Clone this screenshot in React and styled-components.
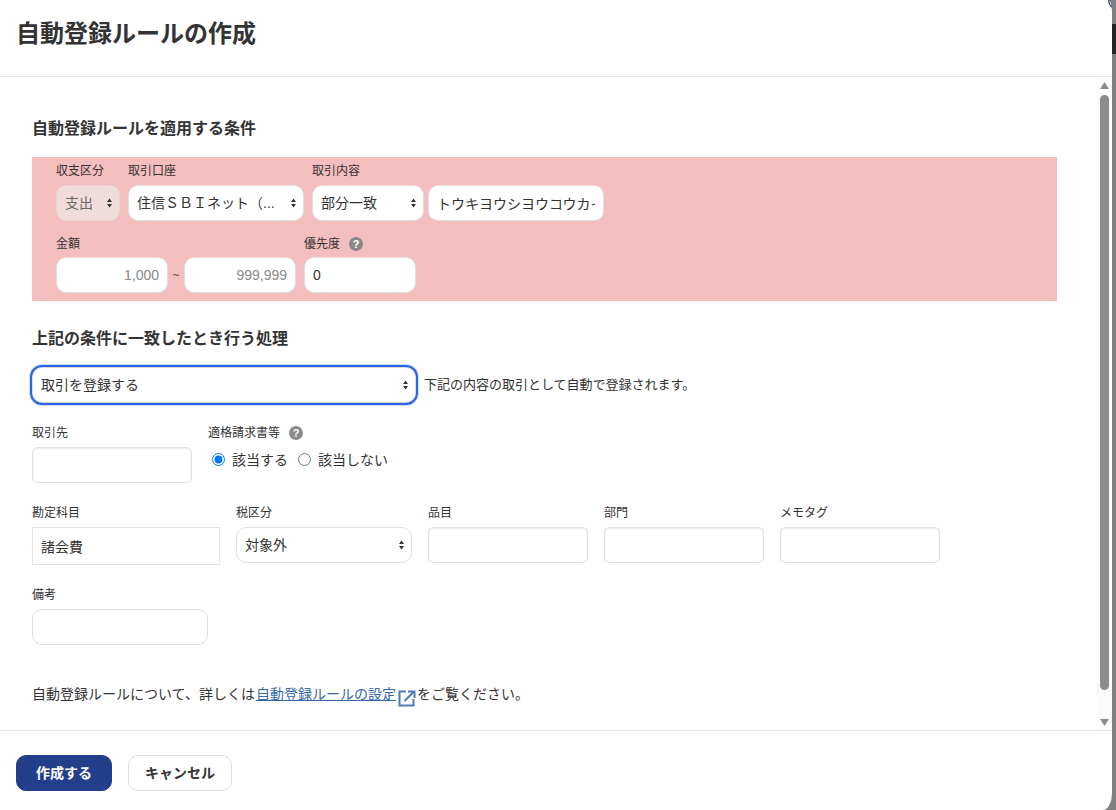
import React from "react";
import styled, { createGlobalStyle } from "styled-components";

const Global = createGlobalStyle`
  html, body { margin: 0; padding: 0; height: 100%; overflow: hidden; background: #808080; }
  body { font-family: "Liberation Sans", "Noto Sans CJK JP", sans-serif; color: #333; }
  * { box-sizing: border-box; }
`;

const arrows = `url("data:image/svg+xml,%3Csvg xmlns='http://www.w3.org/2000/svg' width='5' height='10'%3E%3Cpath d='M2.5 0.5L5 4H0Z M2.5 9.5L0 6H5Z' fill='%23333'/%3E%3C/svg%3E")`;

const Page = styled.div`
  position: relative;
  display: flex;
  height: 810px;
  width: 1116px;
`;
const CornerMark = styled.svg`
  position: absolute;
  left: 1106px;
  top: 0;
  width: 6px;
  height: 8px;
`;
const Modal = styled.div`
  width: 1112px;
  height: 810px;
  background: #fff;
  border-radius: 0 4px 9px 0 / 0 12px 17px 0;
  display: flex;
  flex-direction: column;
  overflow: hidden;
`;
const Edge = styled.div`
  width: 4px;
  height: 810px;
  padding-top: 24px;
`;
const EdgeMark = styled.div`
  height: 30px;
  background: #262626;
`;
const Header = styled.header`
  height: 77px;
  flex: none;
  border-bottom: 1px solid #e6e6e6;
  padding: 17px 16px 0;
`;
const Title = styled.h1`
  margin: 0;
  font-size: 24px;
  line-height: 34px;
  font-weight: 700;
`;
const Middle = styled.div`
  flex: 1;
  display: flex;
  min-height: 0;
`;
const Body = styled.main`
  flex: 1;
  padding: 41px 40px 0 32px;
`;
const Bar = styled.div`
  width: 15px;
  flex: none;
  background: #fbfbfb;
  display: flex;
  flex-direction: column;
  align-items: center;
  padding-top: 5px;
`;
const Thumb = styled.div`
  width: 9px;
  height: 595px;
  margin: 6px 0 29px;
  border-radius: 5px;
  background: #8c8c8c;
`;
const Section = styled.h2`
  margin: ${(p) => p.$top ?? 0}px 0 0;
  font-size: 16px;
  line-height: 22px;
  font-weight: 700;
`;
const Band = styled.div`
  width: 1025px;
  height: 144px;
  margin-top: 17px;
  background: #f4bdbe;
  padding: 5px 24px 0;
`;
const Row = styled.div`
  display: flex;
  align-items: flex-start;
  gap: ${(p) => p.$gap ?? 8}px;
  margin-top: ${(p) => p.$top ?? 0}px;
`;
const Field = styled.div`
  width: ${(p) => p.$w}px;
  flex: none;
  display: flex;
  flex-direction: column;
`;
const Label = styled.label`
  font-size: 12px;
  line-height: 18px;
  height: 18px;
  margin-bottom: ${(p) => p.$mb ?? 5}px;
  white-space: nowrap;
  display: flex;
  align-items: center;
`;
const Help = styled.svg`
  width: 14px;
  height: 14px;
  margin-left: 9px;
  flex: none;
`;
const Select = styled.select`
  appearance: none;
  height: 36px;
  width: 100%;
  font: 14px "Liberation Sans", "Noto Sans CJK JP", sans-serif;
  color: #333;
  border: 1px solid #e0e0e0;
  border-radius: 10px;
  padding: 0 20px 0 8px;
  background-color: #fff;
  background-image: ${arrows};
  background-repeat: no-repeat;
  background-position: right 7px center;
  opacity: 1;
  &:disabled {
    background-color: #f1dcdc;
    color: #666;
    border-color: #ecd4d4;
  }
`;
const FocusSelect = styled(Select)`
  width: 384px;
  flex: none;
  outline: 2px solid #2a63e4;
  outline-offset: 0;
  border-radius: 10px;
  border-color: #ddd;
  border-bottom-color: #d2d2d2;
  box-shadow: 0 0 0 3px rgba(42, 99, 228, 0.22);
`;
const Input = styled.input`
  display: block;
  width: 100%;
  height: ${(p) => p.$h ?? 36}px;
  font: 14px "Liberation Sans", "Noto Sans CJK JP", sans-serif;
  color: #333;
  text-align: ${(p) => p.$right ? "right" : "left"};
  border: 1px solid ${(p) => p.$plain ? "#e4e2dc" : "#e0e0e0"};
  border-radius: ${(p) => p.$square ? 0 : 10}px;
  background: #fff;
  padding: 0 8px;
  outline: none;
  &::placeholder { color: #8a8a8a; opacity: 1; }
`;
const EmptyInput = styled(Input)`
  border: 1px solid #e4e2d8;
  border-radius: 5px;
  box-shadow: inset 0 1px 2px rgba(120, 115, 90, 0.18);
`;
const Tilde = styled.span`
  width: 16px;
  flex: none;
  text-align: center;
  font-size: 12px;
  line-height: 36px;
  color: #555;
`;
const NoGap = styled.div`
  display: flex;
  align-items: flex-start;
`;
const Hint = styled.span`
  font-size: 13px;
  line-height: 36px;
  margin-left: 8px;
  white-space: nowrap;
`;
const Radios = styled.div`
  display: flex;
  align-items: center;
  height: 16px;
  margin-top: 4px;
  padding-left: 3px;
`;
const RadioLabel = styled.label`
  display: flex;
  align-items: center;
  font-size: 14px;
  margin-right: 9px;
  white-space: nowrap;
`;
const Radio = styled.input`
  width: 13px;
  height: 13px;
  margin: 0 7px 0 1px;
  accent-color: #0075ff;
`;
const Note = styled.p`
  margin: 39px 0 0;
  font-size: 14px;
  line-height: 20px;
  display: flex;
  align-items: center;
  white-space: nowrap;
`;
const Link = styled.a`
  color: #3668a8;
  text-decoration: underline;
  margin-left: 1px;
`;
const LinkIcon = styled.svg`
  width: 18px;
  height: 18px;
  margin: 4px 1px -4px 2px;
  flex: none;
`;
const Footer = styled.footer`
  height: 80px;
  flex: none;
  border-top: 1px solid #e6e6e6;
  padding: 24px 16px 0;
  display: flex;
  gap: 16px;
  align-items: flex-start;
`;
const Button = styled.button`
  height: 36px;
  width: ${(p) => p.$w}px;
  border-radius: 10px;
  font: 700 14px "Liberation Sans", "Noto Sans CJK JP", sans-serif;
  border: 1px solid ${(p) => p.$primary ? "#233f8c" : "#e0e0e0"};
  background: ${(p) => p.$primary ? "#233f8c" : "#fff"};
  color: ${(p) => p.$primary ? "#fff" : "#333"};
  padding: 0 0 3px;
`;

const HelpIcon = () => (
  <Help viewBox="0 0 14 14">
    <circle cx="7" cy="7" r="7" fill="#8a8a8a" />
    <text x="7" y="11" textAnchor="middle" fontSize="11" fontWeight="700" fill="#fff" fontFamily="Liberation Sans">?</text>
  </Help>
);

export default function App() {
  return (
    <Page>
      <Global />
      <Modal>
        <Header>
          <Title>自動登録ルールの作成</Title>
        </Header>
        <Middle>
          <Body>
            <Section>自動登録ルールを適用する条件</Section>
            <Band>
              <Row>
                <Field $w={64}>
                  <Label>収支区分</Label>
                  <Select disabled><option>支出</option></Select>
                </Field>
                <Field $w={176}>
                  <Label>取引口座</Label>
                  <Select><option>住信ＳＢＩネット（...</option></Select>
                </Field>
                <Row $gap={4}>
                  <Field $w={112}>
                    <Label>取引内容</Label>
                    <Select><option>部分一致</option></Select>
                  </Field>
                  <Field $w={176}>
                    <Label>&nbsp;</Label>
                    <Input defaultValue="トウキヨウシヨウコウカイギシヨ" />
                  </Field>
                </Row>
              </Row>
              <Row $top={14}>
                <Field $w={240}>
                  <Label $mb={4}>金額</Label>
                  <NoGap>
                    <Field $w={112}><Input $right placeholder="1,000" /></Field>
                    <Tilde>~</Tilde>
                    <Field $w={112}><Input $right placeholder="999,999" /></Field>
                  </NoGap>
                </Field>
                <Field $w={112}>
                  <Label $mb={4}>優先度<HelpIcon /></Label>
                  <Input defaultValue="0" />
                </Field>
              </Row>
            </Band>

            <Section $top={27}>上記の条件に一致したとき行う処理</Section>
            <Row $gap={0} $top={17}>
              <FocusSelect><option>取引を登録する</option></FocusSelect>
              <Hint>下記の内容の取引として自動で登録されます。</Hint>
            </Row>

            <Row $gap={16} $top={21}>
              <Field $w={160}>
                <Label>取引先</Label>
                <EmptyInput />
              </Field>
              <Field $w={300}>
                <Label>適格請求書等<HelpIcon /></Label>
                <Radios>
                  <RadioLabel><Radio type="radio" name="q" defaultChecked />該当する</RadioLabel>
                  <RadioLabel><Radio type="radio" name="q" />該当しない</RadioLabel>
                </Radios>
              </Field>
            </Row>

            <Row $gap={16} $top={21}>
              <Field $w={188}>
                <Label>勘定科目</Label>
                <Input $h={38} $square $plain defaultValue="諸会費" />
              </Field>
              <Field $w={176}>
                <Label>税区分</Label>
                <Select><option>対象外</option></Select>
              </Field>
              <Field $w={160}>
                <Label>品目</Label>
                <EmptyInput />
              </Field>
              <Field $w={160}>
                <Label>部門</Label>
                <EmptyInput />
              </Field>
              <Field $w={160}>
                <Label>メモタグ</Label>
                <EmptyInput />
              </Field>
            </Row>

            <Row $top={21}>
              <Field $w={176}>
                <Label>備考</Label>
                <Input />
              </Field>
            </Row>

            <Note>
              自動登録ルールについて、詳しくは<Link href="#">自動登録ルールの設定</Link>
              <LinkIcon viewBox="0 0 18 18" fill="none" stroke="#4a7db8" strokeWidth="2">
                <path d="M8 2.5H1.5V16.5H15.5V10" />
                <path d="M6.5 12L15.5 3M10 2.5H16.5V9" />
              </LinkIcon>
              をご覧ください。
            </Note>
          </Body>
          <Bar>
            <svg width="9" height="7" viewBox="0 0 9 7"><path d="M4.5 0L9 7H0Z" fill="#8c8c8c" /></svg>
            <Thumb />
            <svg width="9" height="7" viewBox="0 0 9 7"><path d="M4.5 7L0 0H9Z" fill="#8c8c8c" /></svg>
          </Bar>
        </Middle>
        <Footer>
          <Button $primary $w={96}>作成する</Button>
          <Button $w={104}>キャンセル</Button>
        </Footer>
      </Modal>
      <Edge><EdgeMark /></Edge>
      <CornerMark viewBox="0 0 6 8">
        <path d="M2.5 0C3 3 4 6 6 7" fill="none" stroke="#2f4f9a" strokeWidth="1.3" />
      </CornerMark>
    </Page>
  );
}
